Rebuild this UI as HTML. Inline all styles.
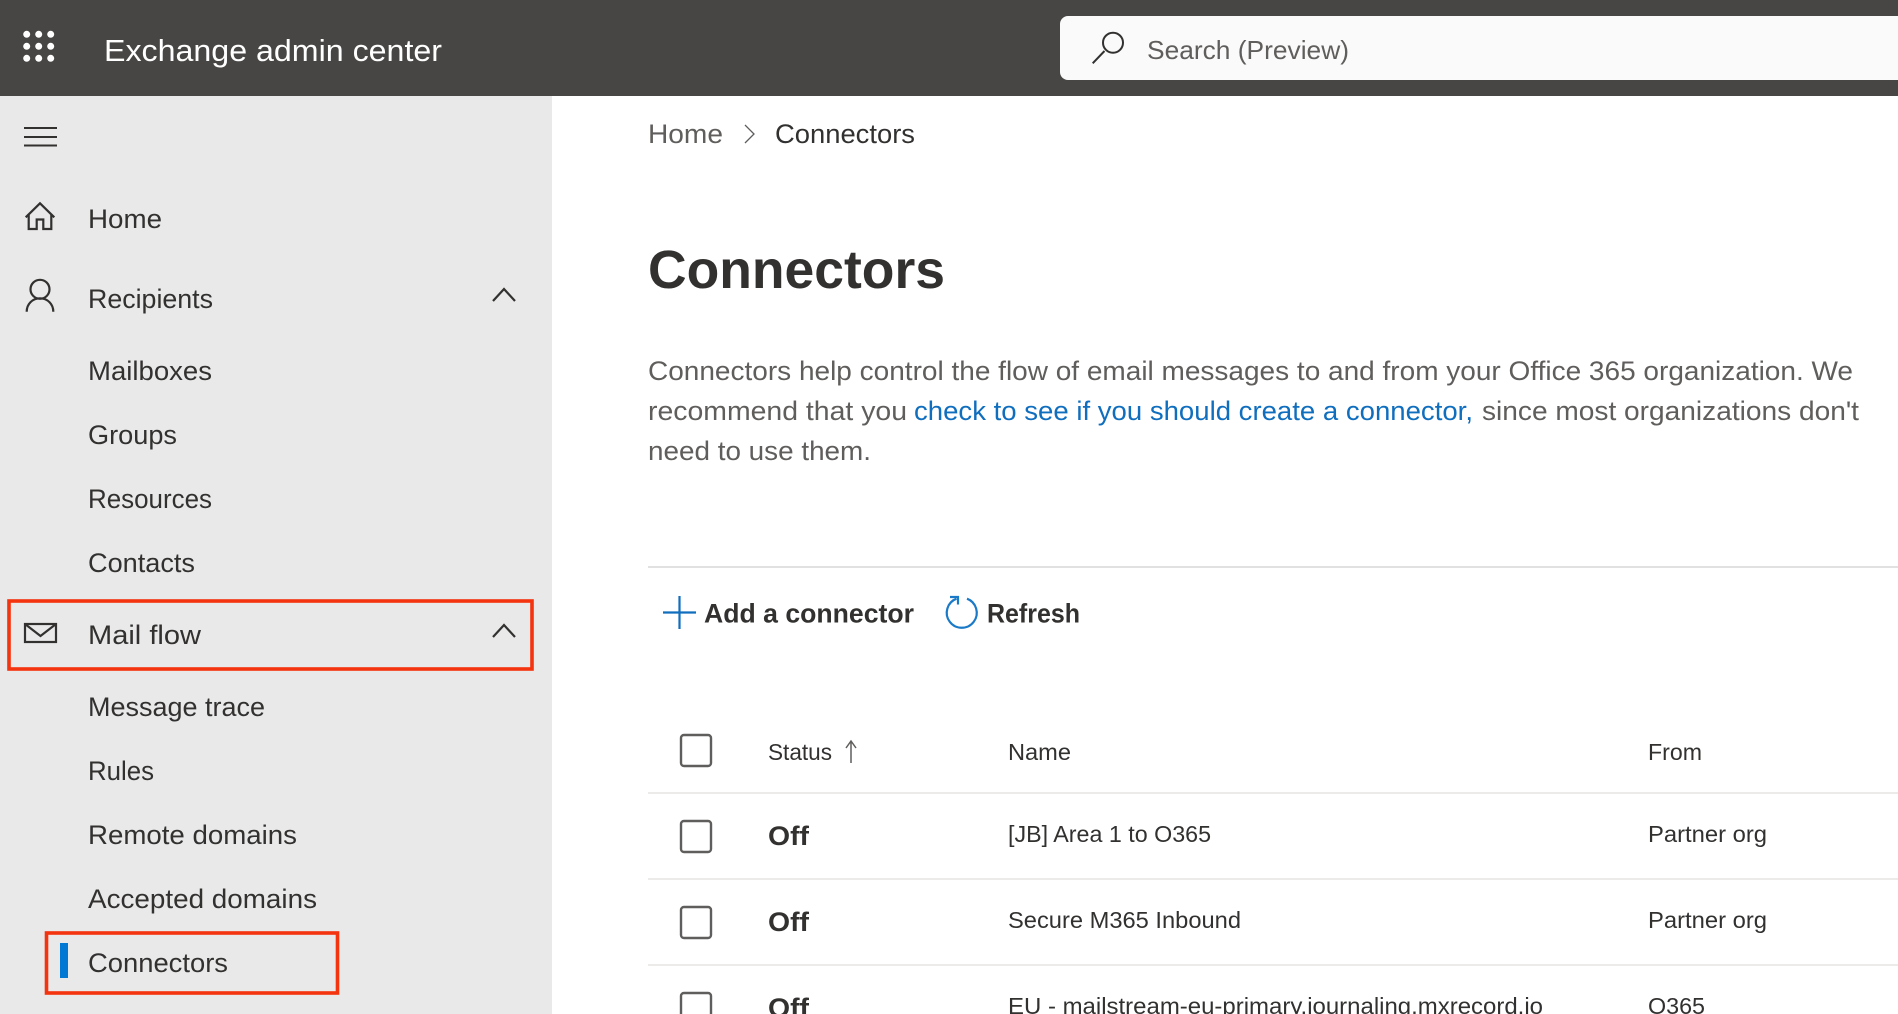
<!DOCTYPE html>
<html lang="en"><head><meta charset="utf-8"><title>Exchange admin center</title>
<style>
html,body{margin:0;padding:0;width:1898px;height:1014px;overflow:hidden;background:#fff}
svg{display:block;filter:blur(.35px)}
text{font-family:"Liberation Sans",Arial,sans-serif;fill:#323130;font-size:27px}
.g{fill:#605e5c}
.t{font-size:23px}
.b{font-weight:bold}
.i{fill:none;stroke:#323130;stroke-width:2.2}
.c{fill:#fff;stroke:#605e5c;stroke-width:2.4}
</style></head><body>
<svg width="1898" height="1014" viewBox="0 0 1898 1014" xmlns="http://www.w3.org/2000/svg">
<rect width="1898" height="96" fill="#484644"/>
<rect y="96" width="552" height="918" fill="#e9e9e9"/>
<g fill="#fff">
<circle cx="26.700" cy="34.300" r="3.500"/><circle cx="38.700" cy="34.300" r="3.500"/><circle cx="50.700" cy="34.300" r="3.500"/>
<circle cx="26.700" cy="46.300" r="3.500"/><circle cx="38.700" cy="46.300" r="3.500"/><circle cx="50.700" cy="46.300" r="3.500"/>
<circle cx="26.700" cy="58.300" r="3.500"/><circle cx="38.700" cy="58.300" r="3.500"/><circle cx="50.700" cy="58.300" r="3.500"/>
</g>
<text x="104" y="61" style="fill:#fff;font-size:31px" textLength="338" lengthAdjust="spacingAndGlyphs">Exchange admin center</text>
<path d="M1068 16H1898V80H1068a8 8 0 0 1-8-8V24a8 8 0 0 1 8-8z" fill="#fafafa"/>
<circle cx="1113" cy="42.700" r="10" class="i" style="stroke-width:2"/>
<path d="M1104.500 51L1092.700 63.300" class="i" style="stroke-width:2"/>
<text x="1147" y="59" class="g" style="font-size:26px" textLength="202" lengthAdjust="spacingAndGlyphs">Search (Preview)</text>

<path d="M24 128H57M24 137H57M24 145.500H57" class="i" style="stroke-width:2"/>
<path d="M25.700 217.300L40 203.300L54.300 217.300M28.700 214.500V229H36.700V219.500H43.300V229H51.300V214.500" class="i"/>
<text x="88" y="228" textLength="74" lengthAdjust="spacingAndGlyphs">Home</text>
<circle cx="40" cy="289.300" r="9.500" class="i"/>
<path d="M26.700 311.700C26.700 304 32.500 298.300 40 298.300C47.500 298.300 53.300 304 53.300 311.700" class="i"/>
<text x="88" y="308" textLength="125" lengthAdjust="spacingAndGlyphs">Recipients</text>
<path d="M493 301L504 289L515 301" class="i"/>
<text x="88" y="380" textLength="124" lengthAdjust="spacingAndGlyphs">Mailboxes</text>
<text x="88" y="444" textLength="89" lengthAdjust="spacingAndGlyphs">Groups</text>
<text x="88" y="508" textLength="124" lengthAdjust="spacingAndGlyphs">Resources</text>
<text x="88" y="572" textLength="107" lengthAdjust="spacingAndGlyphs">Contacts</text>
<rect x="9" y="601" width="523" height="68" fill="none" stroke="#f4330f" stroke-width="3.600"/>
<rect x="25" y="624" width="31" height="18" class="i"/>
<path d="M25 624L40.500 636L56 624" class="i"/>
<text x="88" y="644" textLength="113" lengthAdjust="spacingAndGlyphs">Mail flow</text>
<path d="M493 637L504 625L515 637" class="i"/>
<text x="88" y="716" textLength="177" lengthAdjust="spacingAndGlyphs">Message trace</text>
<text x="88" y="780" textLength="66" lengthAdjust="spacingAndGlyphs">Rules</text>
<text x="88" y="844" textLength="209" lengthAdjust="spacingAndGlyphs">Remote domains</text>
<text x="88" y="908" textLength="229" lengthAdjust="spacingAndGlyphs">Accepted domains</text>
<rect x="46.500" y="933" width="291" height="60" fill="none" stroke="#f4330f" stroke-width="3.600"/>
<rect x="60" y="943" width="8" height="35" fill="#0078d4"/>
<text x="88" y="972" textLength="140" lengthAdjust="spacingAndGlyphs">Connectors</text>

<text x="648" y="143" class="g" textLength="75" lengthAdjust="spacingAndGlyphs">Home</text>
<path d="M745 125L754 134L745 143" fill="none" stroke="#605e5c" stroke-width="1.300"/>
<text x="775" y="143" textLength="140" lengthAdjust="spacingAndGlyphs">Connectors</text>
<text x="648" y="288" class="b" style="font-size:54px" textLength="297" lengthAdjust="spacingAndGlyphs">Connectors</text>

<text x="648" y="380" class="g" textLength="1205" lengthAdjust="spacingAndGlyphs">Connectors help control the flow of email messages to and from your Office 365 organization. We</text>
<text x="648" y="420" class="g" textLength="259" lengthAdjust="spacingAndGlyphs">recommend that you</text>
<text x="914" y="420" style="fill:#106ebe" textLength="559" lengthAdjust="spacingAndGlyphs">check to see if you should create a connector,</text>
<text x="1482" y="420" class="g" textLength="377" lengthAdjust="spacingAndGlyphs">since most organizations don't</text>
<text x="648" y="460" class="g" textLength="223" lengthAdjust="spacingAndGlyphs">need to use them.</text>

<rect x="648" y="566" width="1250" height="2" fill="#e1e1e1"/>
<path d="M663 612.500H696M679.500 596V629" fill="none" stroke="#106ebe" stroke-width="2.200"/>
<text x="704" y="622.500" class="b" textLength="210" lengthAdjust="spacingAndGlyphs">Add a connector</text>
<path d="M967 598.700A15 15 0 1 1 956.500 598.700" fill="none" stroke="#1b7ac7" stroke-width="2.200"/>
<path d="M950 597H958V604.500" fill="none" stroke="#1b7ac7" stroke-width="2.200"/>
<text x="987" y="622.500" class="b" textLength="93" lengthAdjust="spacingAndGlyphs">Refresh</text>

<rect x="681" y="735" width="30" height="31" rx="3" class="c"/>
<text x="768" y="760" class="t" textLength="64" lengthAdjust="spacingAndGlyphs">Status</text>
<path d="M851 763V742M846 748L851 741L856 748" fill="none" stroke="#605e5c" stroke-width="1.500"/>
<text x="1008" y="760" class="t" textLength="63" lengthAdjust="spacingAndGlyphs">Name</text>
<text x="1648" y="760" class="t" textLength="54" lengthAdjust="spacingAndGlyphs">From</text>

<rect x="648" y="792" width="1250" height="2" fill="#edebe9"/>
<rect x="681" y="821" width="30" height="31" rx="3" class="c"/>
<text x="768" y="845" class="b" textLength="41" lengthAdjust="spacingAndGlyphs">Off</text>
<text x="1008" y="842" class="t" textLength="203" lengthAdjust="spacingAndGlyphs">[JB] Area 1 to O365</text>
<text x="1648" y="842" class="t" textLength="119" lengthAdjust="spacingAndGlyphs">Partner org</text>

<rect x="648" y="878" width="1250" height="2" fill="#edebe9"/>
<rect x="681" y="907" width="30" height="31" rx="3" class="c"/>
<text x="768" y="931" class="b" textLength="41" lengthAdjust="spacingAndGlyphs">Off</text>
<text x="1008" y="928" class="t" textLength="233" lengthAdjust="spacingAndGlyphs">Secure M365 Inbound</text>
<text x="1648" y="928" class="t" textLength="119" lengthAdjust="spacingAndGlyphs">Partner org</text>

<rect x="648" y="964" width="1250" height="2" fill="#edebe9"/>
<rect x="681" y="993" width="30" height="31" rx="3" class="c"/>
<text x="768" y="1017" class="b" textLength="41" lengthAdjust="spacingAndGlyphs">Off</text>
<text x="1008" y="1014" class="t" textLength="535" lengthAdjust="spacingAndGlyphs">EU - mailstream-eu-primary.journaling.mxrecord.io</text>
<text x="1648" y="1014" class="t" textLength="57" lengthAdjust="spacingAndGlyphs">O365</text>
</svg>
</body></html>
